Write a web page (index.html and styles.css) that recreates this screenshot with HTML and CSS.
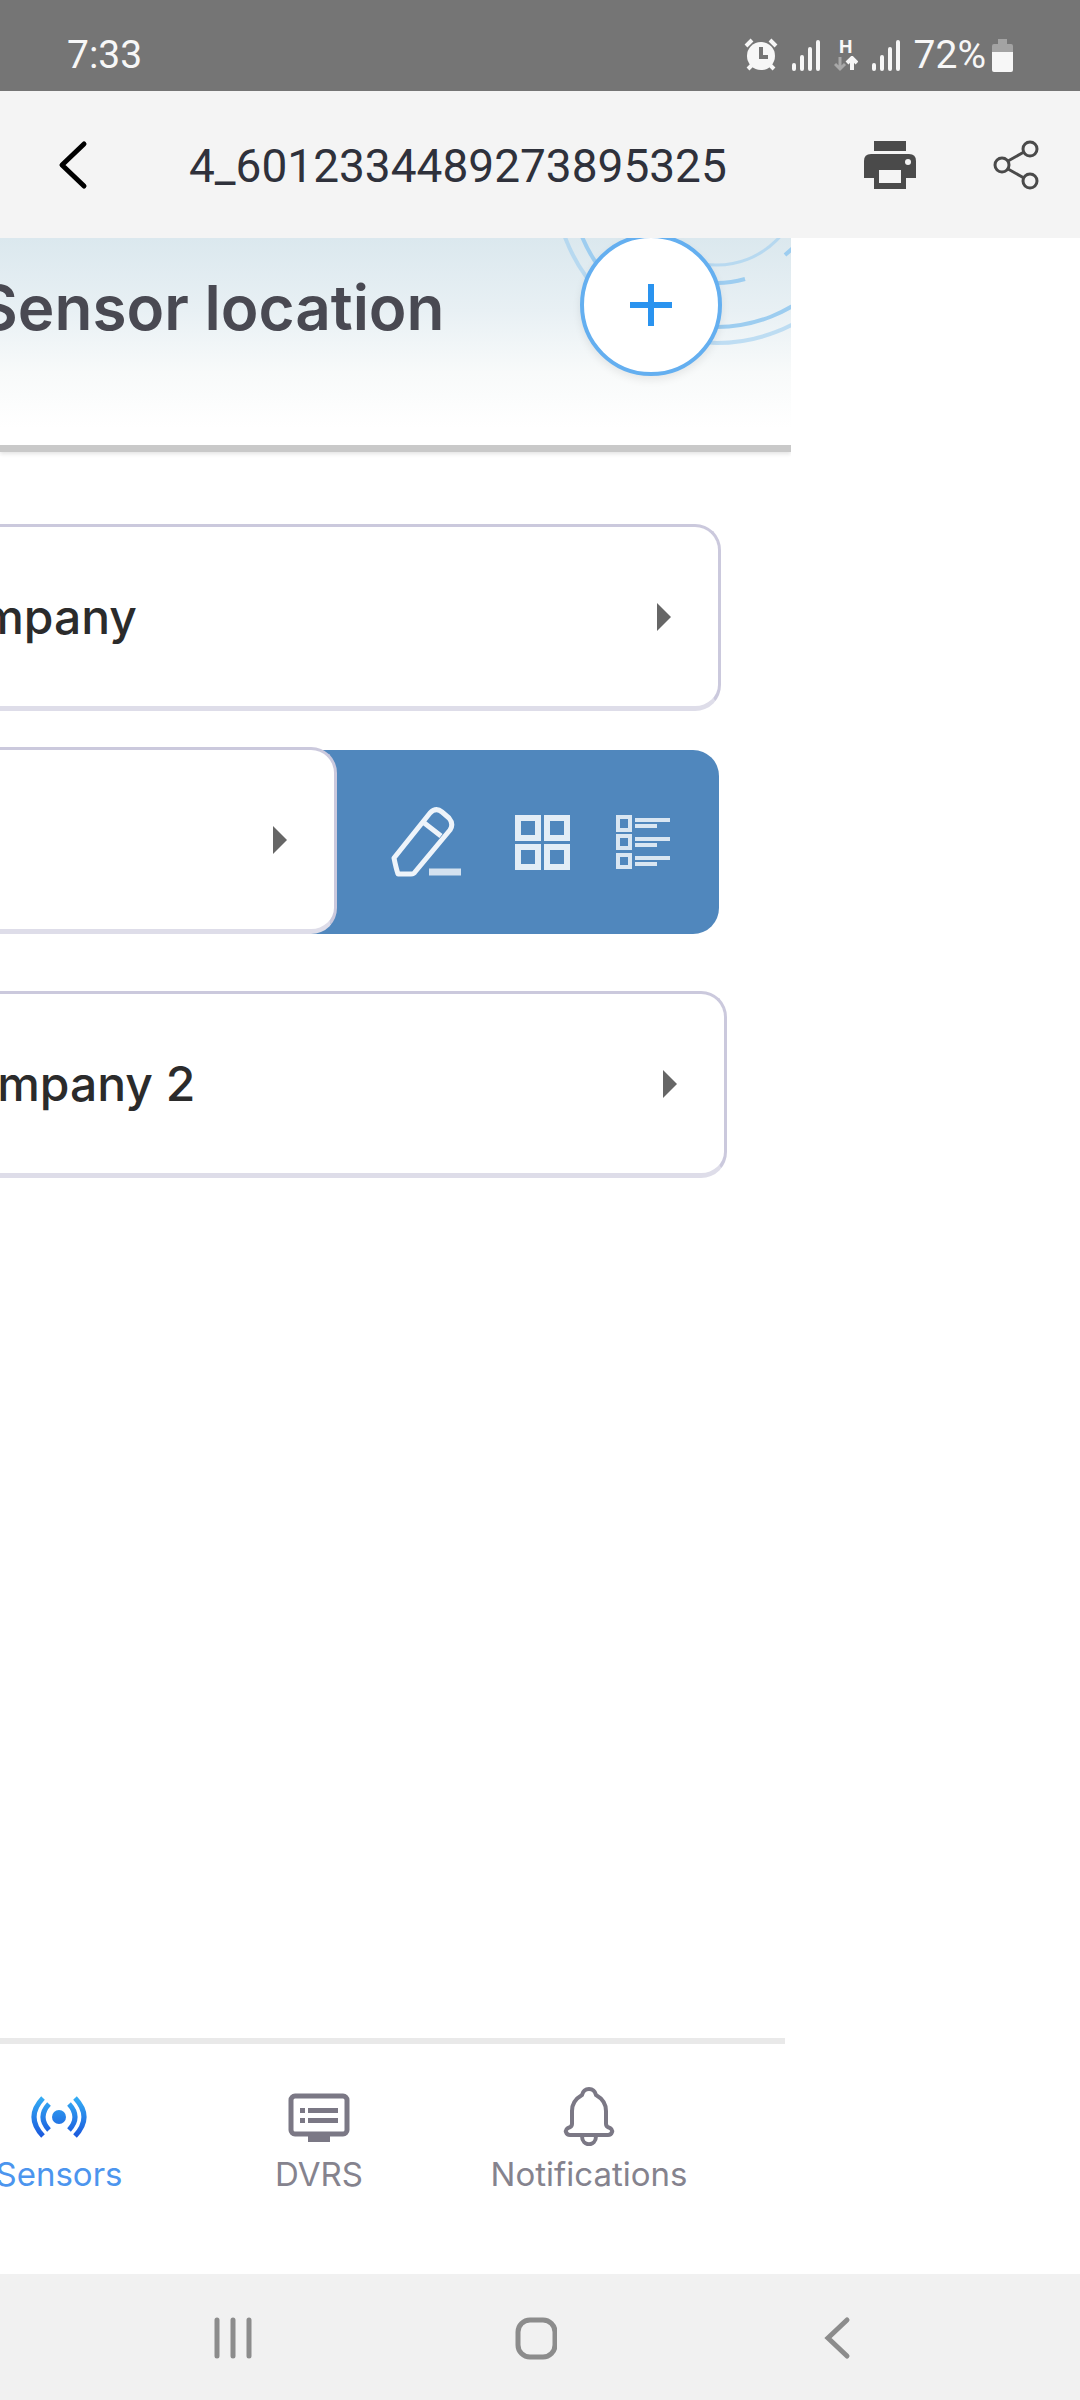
FILE: index.html
```html
<!DOCTYPE html>
<html lang="en">
<head>
    <meta charset="UTF-8">
    <meta name="viewport" content="width=device-width, initial-scale=1.0">
    <title>4_6012334489273895325</title>
    <link rel="stylesheet" href="styles.css">
</head>
<body>
    <!-- Status bar -->
    <div class="status-bar">
        <span class="clock">7:33</span>
        <div class="status-icons">
            <svg class="alarm" width="34" height="34" viewBox="0 0 34 34">
                <circle cx="17" cy="18" r="14" fill="#f7f7f7"/>
                <path d="M2 8l6-6M32 8l-6-6" stroke="#f7f7f7" stroke-width="4"/>
                <path d="M8 27l-4 4M26 27l4 4" stroke="#f7f7f7" stroke-width="4"/>
                <path d="M17 9v10h7" fill="none" stroke="#757575" stroke-width="4"/>
            </svg>
            <svg class="signal" width="28" height="34" viewBox="0 0 28 34">
                <path d="M2 27v4M10 19v12M18 11v20M26 4v27" stroke="#f7f7f7" stroke-width="4" stroke-linecap="round"/>
            </svg>
            <div class="network">
                <span>H</span>
                <svg width="24" height="16" viewBox="0 0 24 16">
                    <path d="M6 1v12M1 8l5 5 5-5" fill="none" stroke="#a8a8a8" stroke-width="3"/>
                    <path d="M18 14V3M13 7l5-5 5 5" fill="none" stroke="#f7f7f7" stroke-width="4"/>
                </svg>
            </div>
            <svg class="signal" width="28" height="34" viewBox="0 0 28 34">
                <path d="M2 27v4M10 19v12M18 11v20M26 4v27" stroke="#f7f7f7" stroke-width="4" stroke-linecap="round"/>
            </svg>
            <span class="percent">72%</span>
            <svg class="battery" width="21" height="34" viewBox="0 0 21 34">
                <path d="M6 1h9v5h4q2 0 2 2v6H0V8q0-2 2-2h4z" fill="#a3a3a3"/>
                <path d="M0 14h21v18q0 2-2 2H2q-2 0-2-2z" fill="#f7f7f7"/>
            </svg>
        </div>
    </div>

    <!-- Viewer toolbar -->
    <header class="toolbar">
        <button class="icon-button" aria-label="Back">
            <svg width="30" height="50" viewBox="0 0 30 50">
                <path d="M26 4L4 25l22 21" fill="none" stroke="#000" stroke-width="5" stroke-linecap="round" stroke-linejoin="round"/>
            </svg>
        </button>
        <h1 class="file-name">4_6012334489273895325</h1>
        <button class="icon-button" aria-label="Print">
            <svg width="54" height="50" viewBox="0 0 54 50">
                <path d="M11 1h32v10H11zM8 14h38q7 0 7 7v17H43v11H11V38H1V21q0-7 7-7zM16 30v13h22V30z" fill="#4a4a4a" fill-rule="evenodd"/>
                <circle cx="45" cy="22" r="3" fill="#f4f4f4"/>
            </svg>
        </button>
        <button class="icon-button share" aria-label="Share">
            <svg width="46" height="50" viewBox="0 0 46 50">
                <g fill="none" stroke="#4a4a4a" stroke-width="3">
                    <circle cx="9" cy="25" r="7"/>
                    <circle cx="37" cy="9" r="7"/>
                    <circle cx="37" cy="41" r="7"/>
                    <path d="M15 21l16-9M15 29l16 9"/>
                </g>
            </svg>
        </button>
    </header>

    <!-- Opened page, scrolled past its left edge -->
    <main class="viewer">
        <div class="page">
            <div class="page-header">
                <svg class="rings" width="240" height="207" viewBox="0 0 240 207">
                    <g fill="none" stroke="#9dcdf0" stroke-width="4">
                        <circle cx="166" cy="-57" r="162" opacity=".6"/>
                        <circle cx="166" cy="-57" r="146"/>
                        <circle cx="166" cy="-57" r="84" stroke-width="3" opacity=".6"/>
                        <path d="M166 45q14 0 28-4M234 17l8-7"/>
                    </g>
                </svg>
                <h2>Sensor location</h2>
                <button class="add-button" aria-label="Add">
                    <svg width="42" height="42" viewBox="0 0 42 42">
                        <path d="M21 0v42M0 21h42" stroke="#2a93ef" stroke-width="6"/>
                    </svg>
                </button>
            </div>

            <div class="locations">
                <a href="#" class="card first">
                    <span>Company</span>
                    <svg width="16" height="30" viewBox="0 0 16 30"><path d="M1 1l14 14L1 29z" fill="#666"/></svg>
                </a>
                <div class="swipe">
                    <a href="#" class="card front" aria-label="Location">
                        <svg width="16" height="30" viewBox="0 0 16 30"><path d="M1 1l14 14L1 29z" fill="#666"/></svg>
                    </a>
                    <div class="actions">
                        <button aria-label="Edit">
                            <svg width="70" height="70" viewBox="0 0 70 70">
                                <path d="M3 51L39 6q6-6 12-1l7 6q5 6 1 12L24 65q-1 2-4 2H7q-2-6-4-16zM32 15l18 14" fill="none" stroke="#eef4fa" stroke-width="5" stroke-linejoin="round"/>
                                <path d="M38 65h32" stroke="#d3e1ef" stroke-width="7"/>
                            </svg>
                        </button>
                        <button aria-label="Grid view">
                            <svg width="56" height="56" viewBox="0 0 56 56">
                                <path d="M4 4h20v20H4zM33 4h20v20H33zM4 33h20v20H4zM33 33h20v20H33z" fill="none" stroke="#e3edf6" stroke-width="6"/>
                            </svg>
                        </button>
                        <button aria-label="List view">
                            <svg width="56" height="56" viewBox="0 0 56 56">
                                <g fill="none" stroke="#d9e6f2" stroke-width="4">
                                    <path d="M3 3h12v13H3zM3 22h12v12H3zM3 41h12v12H3z"/>
                                    <path d="M20 6h35M20 12h22M20 25h35M20 31h22M20 44h35M20 50h22"/>
                                </g>
                            </svg>
                        </button>
                    </div>
                </div>
                <a href="#" class="card last">
                    <span>Company 2</span>
                    <svg width="16" height="30" viewBox="0 0 16 30"><path d="M1 1l14 14L1 29z" fill="#666"/></svg>
                </a>
            </div>

            <nav class="tabs">
                <a href="#" class="tab active">
                    <svg width="60" height="60" viewBox="0 0 60 60">
                        <defs>
                            <linearGradient id="blue" gradientUnits="userSpaceOnUse" x1="0" y1="10" x2="0" y2="52">
                                <stop offset="0" stop-color="#35b0f5"/>
                                <stop offset="1" stop-color="#1a56dc"/>
                            </linearGradient>
                        </defs>
                        <circle cx="30" cy="31" r="7" fill="url(#blue)"/>
                        <path d="M20 18q-12 13 0 26M40 18q12 13 0 26M14 12q-18 19 0 38M46 12q18 19 0 38" fill="none" stroke="url(#blue)" stroke-width="5"/>
                    </svg>
                    <span>Sensors</span>
                </a>
                <a href="#" class="tab">
                    <svg width="62" height="60" viewBox="0 0 62 60">
                        <rect x="3" y="10" width="56" height="38" rx="4" fill="none" stroke="#7b7885" stroke-width="5"/>
                        <path d="M20 50h22v6H20zM12 22h5v5h-5zM12 32h5v5h-5zM20 22h30v5H20zM20 32h30v5H20z" fill="#7b7885"/>
                    </svg>
                    <span>DVRS</span>
                </a>
                <a href="#" class="tab">
                    <svg width="54" height="60" viewBox="0 0 54 60">
                        <path d="M27 3c-4 0-6 2-7 6C13 13 10 18 10 25v13q0 3-4 4-3 2-2 4 1 3 4 3h38q3 0 4-3 1-2-2-4-4-1-4-4V25c0-7-3-12-10-16-1-4-3-6-7-6zM20 50c0 11 14 11 14 0" fill="none" stroke="#7b7885" stroke-width="4"/>
                    </svg>
                    <span>Notifications</span>
                </a>
            </nav>
        </div>
    </main>

    <!-- System navigation -->
    <footer class="system-nav">
        <button aria-label="Recent apps">
            <svg width="42" height="44" viewBox="0 0 42 44">
                <path d="M5 4v36M21 4v36M37 4v36" stroke="#8c8c8c" stroke-width="5" stroke-linecap="round"/>
            </svg>
        </button>
        <button aria-label="Home">
            <svg width="42" height="44" viewBox="0 0 42 44">
                <rect x="3" y="4" width="37" height="37" rx="12" fill="none" stroke="#8c8c8c" stroke-width="5"/>
            </svg>
        </button>
        <button aria-label="Go back">
            <svg width="42" height="44" viewBox="0 0 42 44">
                <path d="M30 4L11 22l19 18" fill="none" stroke="#8c8c8c" stroke-width="5" stroke-linecap="round"/>
            </svg>
        </button>
    </footer>
</body>
</html>
```

FILE: styles.css
```css
* {
    box-sizing: border-box;
}

body {
    margin: 0;
    min-height: 100vh;
    display: flex;
    flex-direction: column;
    background-color: #ffffff;
    font-family: Roboto, sans-serif;
}

svg {
    display: block;
    flex-shrink: 0;
}

button {
    background: none;
    border: none;
    padding: 0;
    cursor: pointer;
}

a {
    text-decoration: none;
    color: inherit;
}

/* status bar */
.status-bar {
    height: 91px;
    padding: 18px 67px 0 67px;
    display: flex;
    align-items: center;
    justify-content: space-between;
    background-color: #757575;
    color: #f7f7f7;
    font-size: 39px;
    line-height: 46px;
}

.status-icons {
    display: flex;
    align-items: center;
}

.signal {
    margin-left: 14px;
}

.network {
    margin-left: 14px;
    display: flex;
    flex-direction: column;
    align-items: center;
    font-size: 19px;
    font-weight: 700;
    line-height: 18px;
}

.percent {
    margin-left: 14px;
}

.battery {
    margin-left: 6px;
}

/* viewer toolbar */
.toolbar {
    height: 147px;
    padding: 0 41px 0 58px;
    display: flex;
    align-items: center;
    background-color: #f4f4f4;
}

.file-name {
    flex: 1;
    margin: 2px 0 0 101px;
    color: #2f313b;
    font-size: 46px;
    font-weight: 400;
    line-height: 54px;
}

.share {
    margin-left: 76px;
}

/* opened page */
.viewer {
    flex: 1;
    display: flex;
}

.page {
    width: 73.2%;
    display: flex;
    flex-direction: column;
    overflow: hidden;
    font-family: Inter, "Open Sans", sans-serif;
}

.page-header {
    position: relative;
    height: 214px;
    padding-right: 69px;
    display: flex;
    align-items: flex-start;
    justify-content: flex-end;
    background: linear-gradient(#dbe8ee, #e8f0f4 35%, #f8fafa 65%, #ffffff 92%);
    border-bottom: 7px solid #c9c9c9;
    box-shadow: 0 2px 4px #e4e4e4;
}

.rings {
    position: absolute;
    top: 0;
    right: 0;
}

.page-header h2 {
    margin: 34px 135px 0 0;
    color: #494952;
    font-size: 62px;
    font-weight: 600;
    line-height: 72px;
    white-space: nowrap;
}

.add-button {
    position: relative;
    flex-shrink: 0;
    width: 142px;
    height: 142px;
    margin-top: -4px;
    display: flex;
    align-items: center;
    justify-content: center;
    background-color: #ffffff;
    border: 4px solid #64aff0;
    border-radius: 50%;
    box-shadow: 0 4px 8px rgba(0, 0, 0, 0.08);
}

/* location cards */
.locations {
    margin-left: -86px;
    padding-top: 72px;
    display: flex;
    flex-direction: column;
}

.card {
    height: 187px;
    padding: 0 46px;
    display: flex;
    align-items: center;
    justify-content: space-between;
    background-color: #ffffff;
    border: 3px solid #cbc9dd;
    border-bottom: 5px solid #dedde9;
    border-radius: 26px;
    color: #2b2b2b;
    font-size: 48px;
    font-weight: 500;
    line-height: 58px;
}

.first {
    margin-right: 70px;
    padding-left: 0;
}

.last {
    margin: 57px 64px 0 0;
    padding-left: 16px;
}

.swipe {
    height: 184px;
    margin: 39px 72px 0 0;
    display: flex;
    align-items: flex-end;
    background-color: #5087bd;
    border-radius: 26px;
}

.front {
    flex: 1;
    justify-content: flex-end;
}

.actions {
    height: 100%;
    padding: 0 48px 0 54px;
    display: flex;
    align-items: center;
    gap: 45px;
}

.actions button:first-child {
    margin-right: 8px;
}

/* bottom tabs */
.tabs {
    height: 236px;
    margin: auto 6px 0 0;
    padding-top: 42px;
    display: flex;
    align-items: flex-start;
    border-top: 6px solid #e9e9e9;
}

.tab {
    display: flex;
    flex-direction: column;
    align-items: center;
    gap: 8px;
    color: #85838e;
    font-size: 33px;
    line-height: 40px;
}

.tab:nth-child(1) {
    width: 118px;
}

.tab:nth-child(2) {
    width: 402px;
}

.tab:nth-child(3) {
    width: 138px;
}

.tab.active span {
    color: #4c95ee;
}

/* system navigation */
.system-nav {
    height: 126px;
    padding: 2px 221px 0 212px;
    display: flex;
    align-items: center;
    justify-content: space-between;
    background-color: #f1f1f1;
}
```
